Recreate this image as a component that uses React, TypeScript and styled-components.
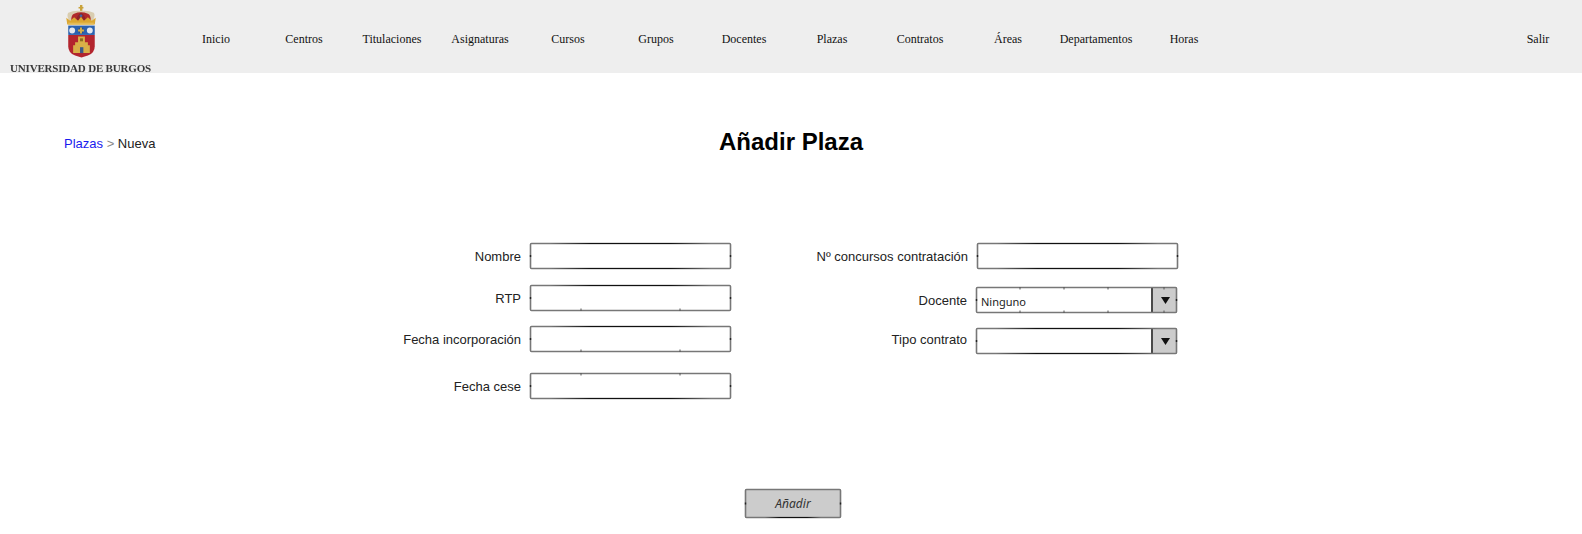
import React from "react";
import styled, { createGlobalStyle } from "styled-components";

const Global = createGlobalStyle`
  html, body { margin: 0; padding: 0; background: #fff; }
  body { font-family: "Liberation Sans", Arial, sans-serif; overflow: hidden; }
`;

const Page = styled.div`
  width: 1582px;
  height: 534px;
  display: flex;
  flex-direction: column;
`;

const TopBar = styled.header`
  height: 73px;
  background: #eeeeee;
  display: flex;
  align-items: center;
  font-family: "Liberation Serif", "Times New Roman", serif;
  font-size: 12px;
  color: #111;
`;

const Brand = styled.div`
  width: 161px;
  height: 73px;
  flex: none;
  margin-right: 10px;
  display: flex;
  flex-direction: column;
  align-items: center;
  padding-top: 4px;
  box-sizing: border-box;
  overflow: hidden;
`;

const Crest = styled.svg`
  width: 32px;
  height: 54px;
  filter: blur(0.5px);
  flex: none;
`;

const BrandName = styled.span`
  margin-top: 5px;
  font-size: 11px;
  font-weight: bold;
  letter-spacing: -0.19px;
  color: #3a3a3a;
  white-space: nowrap;
  line-height: 10px;
  filter: blur(0.35px);
`;

const Nav = styled.nav`
  display: flex;
  flex: 1;
  height: 100%;
  align-items: center;
  padding: 5px 0 0 1px;
  box-sizing: border-box;
`;

const NavItem = styled.a`
  width: 88px;
  text-align: center;
  white-space: nowrap;
`;

const Logout = styled.a`
  margin-left: auto;
  width: 88px;
  text-align: center;
`;

const TitleRow = styled.div`
  display: grid;
  grid-template-columns: 1fr auto 1fr;
  align-items: center;
  padding: 54px 64px 0;
  height: 30px;
`;

const Crumbs = styled.div`
  font-size: 13px;
  color: #222;
  white-space: nowrap;
  padding-top: 3px;
`;

const CrumbLink = styled.a`
  color: #1a1aee;
`;

const CrumbSep = styled.span`
  color: #888;
`;

const Title = styled.h1`
  margin: 0;
  font-size: 24px;
  font-weight: bold;
  color: #000;
  line-height: 30px;
`;

const Form = styled.form`
  display: flex;
  margin-top: 86px;
  padding-left: 380px;
`;

const Column = styled.div<{ $width: number }>`
  width: ${(p) => p.$width}px;
  display: flex;
  flex-direction: column;
`;

const Row = styled.div<{ $top: number; $labelWidth: number }>`
  display: grid;
  grid-template-columns: ${(p) => p.$labelWidth}px 201px;
  column-gap: 9px;
  align-items: center;
  margin-top: ${(p) => p.$top}px;
`;

const Label = styled.label<{ $lift?: number; $drop?: number }>`
  font-size: 13px;
  color: #222;
  text-align: right;
  white-space: nowrap;
  padding-bottom: ${(p) => p.$lift ?? 0}px;
  padding-top: ${(p) => p.$drop ?? 0}px;
`;

const FieldBox = styled.div`
  position: relative;
  height: 26px;
  display: flex;
  align-items: center;
`;

const Sketch = styled.svg`
  position: absolute;
  inset: 0;
  width: 100%;
  height: 100%;
  overflow: visible;
  pointer-events: none;
`;

const FieldText = styled.span`
  position: relative;
  padding: 3px 0 0 5px;
  font-family: "Noto Sans", "DejaVu Sans", sans-serif;
  font-size: 11px;
  color: #222;
`;

const Arrow = styled.span`
  position: absolute;
  right: 0;
  top: 0;
  bottom: 0;
  width: 26px;
  background: #cccccc;
  border-left: 2px solid #4a4a4a;
  box-sizing: border-box;
  display: flex;
  align-items: center;
  justify-content: center;
`;

const Actions = styled.div`
  display: flex;
  justify-content: center;
  margin-top: 90px;
  margin-left: 4px;
`;

const SubmitBox = styled.button`
  position: relative;
  width: 96px;
  height: 29px;
  padding: 0;
  border: none;
  background: #cccccc;
  font-family: "Noto Sans", "DejaVu Sans", sans-serif;
  font-style: italic;
  font-size: 12px;
  color: #333;
`;

type OutlineProps = {
  w: number;
  h: number;
  top?: boolean;
  bottom?: boolean;
  ticksTop?: number[];
  ticksBottom?: number[];
};

const Outline = ({ w, h, top, bottom, ticksTop = [], ticksBottom = [] }: OutlineProps) => {
  const id = `fade-${w}`;
  return (
    <Sketch viewBox={`0 0 ${w} ${h}`} preserveAspectRatio="none">
      <defs>
        <linearGradient id={id} gradientUnits="userSpaceOnUse" x1="20" y1="0" x2={w - 20} y2="0">
          <stop offset="0" stopColor="#777" />
          <stop offset="0.25" stopColor="#111" />
          <stop offset="0.75" stopColor="#111" />
          <stop offset="1" stopColor="#777" />
        </linearGradient>
      </defs>
      <rect x=".5" y=".5" width={w - 1} height={h - 1} rx="1" fill="none" stroke="#777" strokeWidth="1.6" />
      {top && <path d={`M20 .5H${w - 20}`} fill="none" stroke={`url(#${id})`} strokeWidth="1.1" />}
      {bottom && <path d={`M20 ${h - 0.5}H${w - 20}`} fill="none" stroke={`url(#${id})`} strokeWidth="1.1" />}
      <path d={ticksTop.map((x) => `M${x} 0V2.5`).join("")} stroke="#555" fill="none" />
      <path d={ticksBottom.map((x) => `M${x} ${h - 2.5}V${h}`).join("")} stroke="#555" fill="none" />
      <path d={`M.5 ${h / 2 - 1}V${h / 2 + 1}M${w - 0.5} ${h / 2 - 1}V${h / 2 + 1}`} stroke="#222" strokeWidth="1.4" fill="none" />
    </Sketch>
  );
};

const Triangle = () => (
  <svg width="9" height="7" viewBox="0 0 9 7">
    <path d="M0 0H9L4.5 7Z" fill="#111" />
  </svg>
);

const CrestImage = () => (
  <Crest viewBox="0 0 32 55">
    <rect x="15" y="1" width="2.4" height="8" fill="#c9a23a" />
    <rect x="13.5" y="3" width="5" height="1.6" fill="#c9a23a" />
    <path d="M4 17 Q1 12 3 9 Q9 6 16 7 Q23 6 29 9 Q31 12 28 17Z" fill="#d9cdb0" />
    <path d="M6 17 Q6 11 9 10 Q16 7 23 10 Q26 11 26 17Z" fill="#b02a2c" />
    <path d="M11 17 Q12 11 16 9 Q20 11 21 17Z" fill="#8f2428" />
    <circle cx="16" cy="12" r="1.4" fill="#3f63a8" />
    <path d="M1 14L5 17L9 13.5L13 17L16 13L19 17L23 13.5L27 17L31 14L30 21H2Z" fill="#dca731" />
    <rect x="3" y="19" width="26" height="2" fill="#e4bb57" />
    <rect x="3" y="22" width="27" height="9.5" fill="#2b62b0" />
    <circle cx="7" cy="27" r="3" fill="#e3e7ee" />
    <circle cx="16" cy="27" r="3" fill="#2a4f8e" />
    <path d="M15 24H17V30H15ZM13 26H19V28H13Z" fill="#d6b04a" />
    <circle cx="25" cy="27" r="3" fill="#e3e7ee" />
    <path d="M3 31.5H30V43Q30 50 23 52.5L16.5 54.5L10 52.5Q3 50 3 43Z" fill="#b3252e" />
    <path d="M8 50V42H10V39H13V33H20V39H23V42H25V50Z" fill="#d9b048" />
    <rect x="15" y="44" width="3.4" height="6" fill="#3d5a88" />
    <rect x="15" y="35" width="3" height="3" fill="#8a6a20" />
  </Crest>
);

const navItems = ["Inicio", "Centros", "Titulaciones", "Asignaturas", "Cursos", "Grupos", "Docentes", "Plazas", "Contratos", "Áreas", "Departamentos", "Horas"];

const TICKS = [51, 150];
const SELECT_TICKS = [44, 88, 132, 188];

export default function App() {
  return (
    <Page>
      <Global />
      <TopBar>
        <Brand>
          <CrestImage />
          <BrandName>UNIVERSIDAD DE BURGOS</BrandName>
        </Brand>
        <Nav>
          {navItems.map((n) => (
            <NavItem key={n}>{n}</NavItem>
          ))}
          <Logout>Salir</Logout>
        </Nav>
      </TopBar>
      <TitleRow>
        <Crumbs>
          <CrumbLink>Plazas</CrumbLink> <CrumbSep>&gt;</CrumbSep> Nueva
        </Crumbs>
        <Title>Añadir Plaza</Title>
        <span />
      </TitleRow>
      <Form>
        <Column $width={351}>
          <Row $top={0} $labelWidth={141}>
            <Label>Nombre</Label>
            <FieldBox><Outline w={201} h={26} top bottom /></FieldBox>
          </Row>
          <Row $top={16} $labelWidth={141}>
            <Label>RTP</Label>
            <FieldBox><Outline w={201} h={26} top ticksBottom={TICKS} /></FieldBox>
          </Row>
          <Row $top={15} $labelWidth={141}>
            <Label>Fecha incorporación</Label>
            <FieldBox><Outline w={201} h={26} top ticksBottom={TICKS} /></FieldBox>
          </Row>
          <Row $top={21} $labelWidth={141}>
            <Label>Fecha cese</Label>
            <FieldBox><Outline w={201} h={26} bottom ticksTop={TICKS} /></FieldBox>
          </Row>
        </Column>
        <Column $width={447}>
          <Row $top={0} $labelWidth={237}>
            <Label>Nº concursos contratación</Label>
            <FieldBox><Outline w={201} h={26} top bottom /></FieldBox>
          </Row>
          <Row $top={18} $labelWidth={236}>
            <Label>Docente</Label>
            <FieldBox>
              <FieldText>Ninguno</FieldText>
              <Arrow><Triangle /></Arrow>
              <Outline w={201} h={26} ticksTop={SELECT_TICKS} ticksBottom={SELECT_TICKS} />
            </FieldBox>
          </Row>
          <Row $top={15} $labelWidth={236}>
            <Label $lift={3}>Tipo contrato</Label>
            <FieldBox>
              <Arrow><Triangle /></Arrow>
              <Outline w={201} h={26} top bottom />
            </FieldBox>
          </Row>
        </Column>
      </Form>
      <Actions>
        <SubmitBox type="button">
          <Outline w={96} h={29} bottom />
          Añadir
        </SubmitBox>
      </Actions>
    </Page>
  );
}
